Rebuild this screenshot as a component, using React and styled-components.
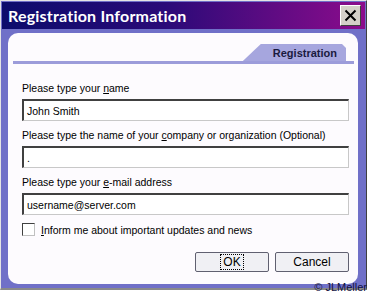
import React from "react";
import styled, { createGlobalStyle } from "styled-components";

const GlobalStyle = createGlobalStyle`
  html, body {
    margin: 0;
    padding: 0;
    background: #ffffff;
    overflow: hidden;
  }
`;

export default function App() {
  return (
    <Page>
      <GlobalStyle />
      <Window>
        <TitleBar>
          <Title>Registration Information</Title>
          <CloseButton>
            <svg width="13" height="13" viewBox="0 0 13 13">
              <path d="M1.5 1.5 L11.5 11.5 M11.5 1.5 L1.5 11.5" stroke="#000" strokeWidth="2" />
            </svg>
          </CloseButton>
        </TitleBar>
        <Frame>
          <Panel>
            <TabStrip>
              <Tab>Registration</Tab>
            </TabStrip>
            <Form>
              <Label first>
                Please type your <u>n</u>ame
              </Label>
              <Field>John Smith</Field>
              <Label>
                Please type the name of your <u>c</u>ompany or organization (Optional)
              </Label>
              <Field>.</Field>
              <Label>
                Please type your <u>e</u>-mail address
              </Label>
              <Field>username@server.com</Field>
              <CheckRow>
                <CheckBox />
                <span>
                  <u>I</u>nform me about important updates and news
                </span>
              </CheckRow>
              <Buttons>
                <Button>
                  <FocusRing>OK</FocusRing>
                </Button>
                <Button>Cancel</Button>
              </Buttons>
            </Form>
          </Panel>
        </Frame>
      </Window>
      <Credit>© JLMeller</Credit>
    </Page>
  );
}

const Page = styled.div`
  position: relative;
  width: 367px;
  height: 293px;
`;

const Window = styled.div`
  width: 367px;
  height: 290px;
  box-sizing: border-box;
  display: flex;
  flex-direction: column;
  background: #7070c8;
  border-left: 1px solid #e4e4e4;
  border-top: 1px solid #e4e4e4;
  border-right: 1px solid #404040;
  border-bottom: 2px solid #8a8a8a;
  padding: 1px 1px 0 1px;
`;

const TitleBar = styled.div`
  height: 27px;
  flex: none;
  display: flex;
  align-items: center;
  justify-content: space-between;
  padding: 0 4px 0 6px;
  background: linear-gradient(90deg, #0c0c6c 0%, #2a0a78 45%, #8c0c8c 100%);
`;

const Title = styled.div`
  color: #ffffff;
  font-family: Lato, "DejaVu Sans", sans-serif;
  font-weight: bold;
  font-size: 16px;
  letter-spacing: 0.2px;
`;

const CloseButton = styled.div`
  width: 19px;
  height: 19px;
  display: flex;
  align-items: center;
  justify-content: center;
  background: #d4d0c8;
  border-top: 1px solid #ffffff;
  border-left: 1px solid #ffffff;
  border-right: 1px solid #404040;
  border-bottom: 1px solid #404040;
`;

const Frame = styled.div`
  flex: 1;
  display: flex;
  padding: 4px 7px 4px 6px;
`;

const Panel = styled.div`
  flex: 1;
  background: #fdfbfe;
  border-radius: 10px;
  display: flex;
  flex-direction: column;
  padding: 11px 4px 0 5px;
`;

const TabStrip = styled.div`
  display: flex;
  justify-content: flex-end;
  border-bottom: 3px solid #9c9cda;
  padding-right: 8px;
`;

const Tab = styled.div`
  height: 17px;
  padding: 0 9px 0 30px;
  display: flex;
  align-items: center;
  background: #a6a6de;
  clip-path: polygon(18px 0, calc(100% - 4px) 0, 100% 4px, 100% 100%, 0 100%);
  font-family: "Liberation Sans", Arial, sans-serif;
  font-weight: bold;
  font-size: 11px;
  color: #1a1a40;
`;

const Form = styled.div`
  display: flex;
  flex-direction: column;
  padding: 0 5px 0 9px;
  font-family: "Liberation Sans", Arial, sans-serif;
  font-size: 10.5px;
  color: #000;
`;

const Label = styled.div`
  margin-top: ${({ first }) => (first ? "17px" : "7px")};
  height: 14px;
  line-height: 14px;
`;

const Field = styled.div`
  margin-top: 4px;
  height: 22px;
  box-sizing: border-box;
  display: flex;
  align-items: center;
  padding-left: 3px;
  background: #ffffff;
  border-top: 2px solid #404040;
  border-left: 2px solid #404040;
  border-right: 1px solid #c8c8c8;
  border-bottom: 1px solid #c8c8c8;
`;

const CheckRow = styled.div`
  margin-top: 8px;
  height: 13px;
  display: flex;
  align-items: center;
  gap: 6px;
`;

const CheckBox = styled.div`
  width: 11px;
  height: 11px;
  background: #ffffff;
  border-top: 1px solid #404040;
  border-left: 1px solid #404040;
  border-right: 1px solid #c0c0c0;
  border-bottom: 1px solid #c0c0c0;
`;

const Buttons = styled.div`
  margin-top: 16px;
  display: flex;
  justify-content: flex-end;
  gap: 6px;
`;

const Button = styled.div`
  width: 74px;
  height: 20px;
  box-sizing: border-box;
  display: flex;
  align-items: center;
  justify-content: center;
  background: #f0f0f4;
  border: 1px solid #606070;
  border-radius: 2px;
  font-size: 12px;
  color: #000;
`;

const FocusRing = styled.span`
  outline: 1px dotted #000;
  padding: 0 2px;
  line-height: 14px;
`;

const Credit = styled.div`
  position: absolute;
  right: 0;
  bottom: 0;
  line-height: 11px;
  font-family: "Liberation Sans", Arial, sans-serif;
  font-size: 11px;
  color: #101040;
`;
